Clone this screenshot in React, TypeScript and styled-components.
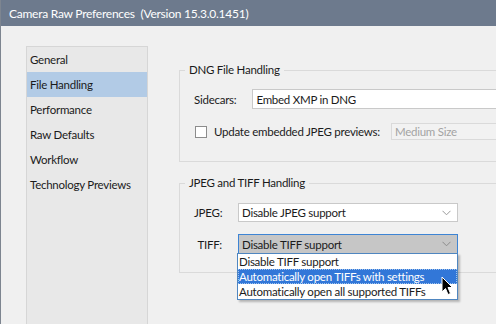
import styled, { createGlobalStyle } from 'styled-components';

const Global = createGlobalStyle`
  html, body { margin: 0; padding: 0; }
  body {
    font-family: "Segoe UI", Lato, "Noto Sans", sans-serif;
    font-size: 11.5px;
    letter-spacing: -0.25px;
    color: #1b1b1b;
  }
`;

const Window = styled.div`
  width: 496px;
  height: 324px;
  overflow: hidden;
  background: #f0f0f0;
  border-left: 1px solid #7d8590;
  box-sizing: border-box;
  display: flex;
  flex-direction: column;
`;

const TitleBar = styled.div`
  height: 26px;
  flex: none;
  background: #6d7a8d;
  color: #ffffff;
  font-size: 12px;
  display: flex;
  align-items: center;
  padding-left: 8px;
  white-space: pre;
`;

const Body = styled.div`
  flex: 1;
  display: flex;
  padding: 20px 0 0 25px;
  min-height: 0;
`;

const Sidebar = styled.ul`
  list-style: none;
  margin: 0;
  padding: 0;
  width: 122px;
  box-sizing: border-box;
  background: #e8e8e8;
  border: 1px solid #d6d6d6;
  border-bottom: none;
  flex: none;
`;

const NavItem = styled.li<{ $active?: boolean }>`
  height: 25px;
  line-height: 25px;
  padding-left: 3px;
  background: ${p => (p.$active ? '#b2cbe6' : 'transparent')};
  white-space: nowrap;
`;

const Panels = styled.div`
  margin-left: 31px;
  width: 360px;
  flex: none;
  display: flex;
  flex-direction: column;
  gap: 13px;
  padding-top: 16px;
`;

const Group = styled.fieldset<{ $pb: number }>`
  margin: 0;
  border: 1px solid #dadada;
  padding: 0 0 ${p => p.$pb}px 14px;
  min-width: 0;
`;

const Legend = styled.legend`
  margin-left: -9px;
  padding: 0 4px;
  line-height: 16px;
`;

const Row = styled.div<{ $mt: number }>`
  display: flex;
  align-items: center;
  margin-top: ${p => p.$mt}px;
`;

const Label = styled.span<{ $w?: number }>`
  width: ${p => (p.$w ? `${p.$w}px` : 'auto')};
  text-align: right;
  flex: none;
  white-space: nowrap;
`;

const Select = styled.div<{ $w: number; $h: number; $ml: number; $open?: boolean; $disabled?: boolean }>`
  position: relative;
  width: ${p => p.$w}px;
  height: ${p => p.$h}px;
  margin-left: ${p => p.$ml}px;
  box-sizing: border-box;
  border: 1px solid ${p => (p.$open ? '#3d84d4' : p.$disabled ? '#dadada' : '#c9c9c9')};
  background: ${p => (p.$open ? '#c6c6c6' : p.$disabled ? '#f2f2f2' : '#ffffff')};
  color: ${p => (p.$disabled ? '#a3a3a3' : '#1b1b1b')};
  display: flex;
  align-items: center;
  padding-left: 3px;
  flex: none;
  white-space: nowrap;
`;

const Chevron = styled.svg`
  position: absolute;
  right: 6px;
  top: 50%;
  margin-top: -3px;
`;

const Check = styled.span`
  width: 12px;
  height: 12px;
  box-sizing: border-box;
  border: 1px solid #8c8c8c;
  background: #fff;
  margin: 0 7px 0 1px;
  flex: none;
`;

const Menu = styled.ul`
  position: absolute;
  left: -2px;
  top: 100%;
  width: 221px;
  margin: 0;
  padding: 0;
  list-style: none;
  background: #fff;
  border: 1px solid #4f86c0;
  box-sizing: border-box;
  box-shadow: 2px 2px 2px rgba(0, 0, 0, 0.25);
  z-index: 2;
`;

const MenuItem = styled.li<{ $hi?: boolean }>`
  height: 15px;
  line-height: 15px;
  padding-left: 1px;
  box-sizing: border-box;
  background: ${p => (p.$hi ? '#3277d8' : 'transparent')};
  color: ${p => (p.$hi ? '#ffffff' : '#1b1b1b')};
  outline: ${p => (p.$hi ? '1px dotted #9fc3ee' : 'none')};
  outline-offset: -1px;
  white-space: nowrap;
`;

const Cursor = styled.svg`
  position: absolute;
  left: 202px;
  top: 41px;
  z-index: 3;
`;

const ChevronIcon = ({ color = '#9a9a9a' }: { color?: string }) => (
  <Chevron width="9" height="6" viewBox="0 0 9 6">
    <path d="M0.5 0.8 L4.5 4.8 L8.5 0.8" fill="none" stroke={color} strokeWidth="1" />
  </Chevron>
);

const navItems = ['General', 'File Handling', 'Performance', 'Raw Defaults', 'Workflow', 'Technology Previews'];

export default function App() {
  return (
    <Window>
      <Global />
      <TitleBar>Camera Raw Preferences  (Version 15.3.0.1451)</TitleBar>
      <Body>
        <Sidebar>
          {navItems.map(n => (
            <NavItem key={n} $active={n === 'File Handling'}>
              {n}
            </NavItem>
          ))}
        </Sidebar>
        <Panels>
          <Group $pb={21}>
            <Legend>DNG File Handling</Legend>
            <Row $mt={11}>
              <Label>Sidecars:</Label>
              <Select $w={260} $h={20} $ml={16}>
                Embed XMP in DNG
                <ChevronIcon />
              </Select>
            </Row>
            <Row $mt={14}>
              <Check />
              <Label>Update embedded JPEG previews:</Label>
              <Select $w={120} $h={17} $ml={11} $disabled>
                Medium Size
              </Select>
            </Row>
          </Group>
          <Group $pb={18}>
            <Legend>JPEG and TIFF Handling</Legend>
            <Row $mt={12}>
              <Label $w={28}>JPEG:</Label>
              <Select $w={220} $h={19} $ml={16}>
                Disable JPEG support
                <ChevronIcon />
              </Select>
            </Row>
            <Row $mt={12}>
              <Label $w={28}>TIFF:</Label>
              <Select $w={220} $h={20} $ml={16} $open>
                Disable TIFF support
                <ChevronIcon color="#8d8d8d" />
                <Menu>
                  <MenuItem>Disable TIFF support</MenuItem>
                  <MenuItem $hi>Automatically open TIFFs with settings</MenuItem>
                  <MenuItem>Automatically open all supported TIFFs</MenuItem>
                </Menu>
                <Cursor width="13" height="20" viewBox="0 0 13 20">
                  <path d="M1 1 L1 16 L4.5 12.5 L7 18.5 L9.5 17.5 L7 11.5 L11.5 11.5 Z" fill="#000" stroke="#fff" strokeWidth="1" />
                </Cursor>
              </Select>
            </Row>
          </Group>
        </Panels>
      </Body>
    </Window>
  );
}
